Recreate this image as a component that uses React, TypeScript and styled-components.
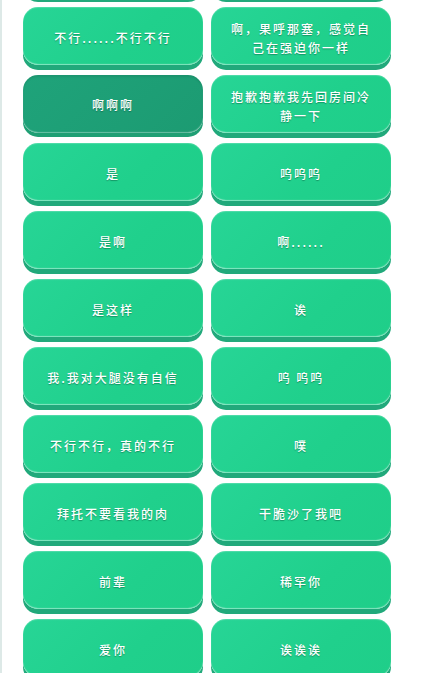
import styled, { createGlobalStyle, css } from 'styled-components'

const GlobalStyle = createGlobalStyle`
  html, body {
    margin: 0;
    padding: 0;
    background: #ffffff;
    overflow: hidden;
  }
`

const Page = styled.div`
  height: 673px;
  overflow: hidden;
  border-left: 2px solid #dde9e7;
  box-sizing: border-box;
  padding-left: 21px;
`

const Board = styled.div`
  display: grid;
  grid-template-columns: 180px 180px;
  column-gap: 8px;
  row-gap: 10px;
  margin-top: -61px;
`

const VoiceButton = styled.button<{ $pressed?: boolean }>`
  height: 58px;
  padding: 3px 20px 0;
  border: none;
  border-radius: 15px;
  color: #ffffff;
  font-family: 'Noto Sans CJK SC', 'Noto Sans', sans-serif;
  font-size: 12px;
  font-weight: 500;
  letter-spacing: 2px;
  line-height: 19px;
  text-align: center;
  text-shadow: 0 1px 1px rgba(0, 60, 40, 0.4);
  cursor: pointer;
  background: linear-gradient(135deg, #27d596 0%, #20d08c 60%, #1fce89 100%);
  box-shadow:
    0 5px 0 #21a97b,
    inset 0 -1px 1px rgba(255, 255, 255, 0.45),
    inset 0 1px 1px rgba(255, 255, 255, 0.2);

  ${({ $pressed }) =>
    $pressed &&
    css`
      padding-top: 1px;
      background: linear-gradient(135deg, #1fa37a 0%, #1c9b72 100%);
      box-shadow:
        0 4px 0 #1f9f74,
        inset 0 -1px 1px rgba(255, 255, 255, 0.35),
        inset 0 2px 2px rgba(0, 0, 0, 0.08);
    `}
`

const voices = [
  '',
  '',
  '不行......不行不行',
  '啊，果呼那塞，感觉自己在强迫你一样',
  '啊啊啊',
  '抱歉抱歉我先回房间冷静一下',
  '是',
  '呜呜呜',
  '是啊',
  '啊......',
  '是这样',
  '诶',
  '我.我对大腿没有自信',
  '呜 呜呜',
  '不行不行，真的不行',
  '噗',
  '拜托不要看我的肉',
  '干脆沙了我吧',
  '前辈',
  '稀罕你',
  '爱你',
  '诶诶诶',
]

export default function App() {
  return (
    <>
      <GlobalStyle />
      <Page>
        <Board>
          {voices.map((text, i) => (
            <VoiceButton key={i} $pressed={text === '啊啊啊'}>
              {text}
            </VoiceButton>
          ))}
        </Board>
      </Page>
    </>
  )
}
